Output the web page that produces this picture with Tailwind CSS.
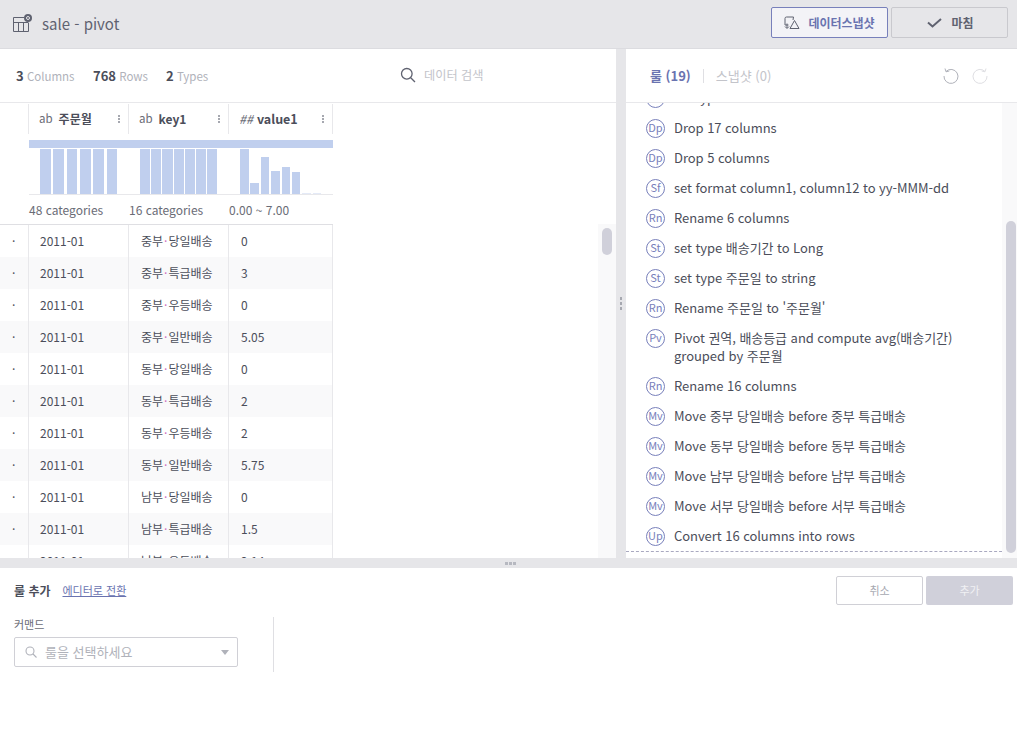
<!DOCTYPE html>
<html lang="ko">
<head>
<meta charset="UTF-8" />
<title>sale - pivot</title>
<script src="https://cdn.jsdelivr.net/npm/@tailwindcss/browser@4"></script>
</head>
<body class="h-[730px] w-[1017px] overflow-hidden bg-white text-[#4b4e5a] font-['Noto_Sans_CJK_KR','Noto_Sans',sans-serif]">

<!-- top bar -->
<header class="h-[49px] bg-[#e6e6e9] border-b border-[#dcdce0] flex items-center pl-[13px] pr-[9px]">
  <svg width="20" height="20" viewBox="0 0 20 20" fill="none" stroke="#5f6270" stroke-width="1" class="mr-[9px]">
    <path d="M11 3.500H.5v14h15V9M.5 8.500h15M5.500 8.500v9M10.500 8.500v9"/>
    <circle cx="15" cy="4" r="4" fill="#5f6270" stroke="none"/>
    <circle cx="15" cy="4" r="1.500" fill="none" stroke="#e6e6e9" stroke-width="1"/>
  </svg>
  <span class="text-[15px] text-[#5f6270]">sale - pivot</span>
  <div class="ml-auto mb-[3px] flex gap-[3px]">
    <button class="w-[117px] h-[31px] rounded-[2px] border border-[#7880bb] bg-[#f3f3f7] flex items-center justify-center gap-[8px] text-[12px] font-bold text-[#6a73b0]">
      <svg width="16" height="14" viewBox="0 0 16 14" fill="none" stroke="#5f6270" stroke-width="1"><path d="M4.500 9H1V2.500Q1 1 2.500 1h7l-.5 3M3 7.500V12M1 10.500l2 2 2-2M6 12.500L10.500 4.500l4.500 8z"/></svg>
      데이터스냅샷
    </button>
    <button class="w-[117px] h-[31px] rounded-[2px] border border-[#c9c9ce] bg-[#e6e6e9] flex items-center justify-center gap-[9px] pl-[2px] text-[12px] font-bold text-[#5f6270]">
      <svg width="15" height="10" viewBox="0 0 15 10" fill="none" stroke="#5f6270" stroke-width="2"><path d="M1 4.500l4.500 4L14 1"/></svg>
      마침
    </button>
  </div>
</header>

<!-- middle -->
<div class="h-[509px] flex">
  <!-- data side -->
  <section class="w-[616px] shrink-0 flex flex-col">
    <div class="h-[54px] shrink-0 border-b border-[#e8e8eb] flex items-center pl-4 text-[11.500px] text-[#b0b2ba]">
      <span class="w-[77px]"><b class="font-bold text-[13px] text-[#4b4e5a]">3</b> Columns</span>
      <span class="w-[73px]"><b class="font-bold text-[13px] text-[#4b4e5a]">768</b> Rows</span>
      <span class="w-[234px]"><b class="font-bold text-[13px] text-[#4b4e5a]">2</b> Types</span>
      <div class="flex items-center gap-[8px]">
        <svg width="16" height="16" viewBox="0 0 16 16" fill="none" stroke="#5f6270" stroke-width="1.300"><circle cx="6.800" cy="6.800" r="5.300"/><path d="M10.700 10.700l4.300 4.300"/></svg>
        <span class="text-[12.200px] text-[#c3c4ca]">데이터 검색</span>
      </div>
    </div>
    <div class="relative flex-1 overflow-hidden">
      <div class="w-[333px]">
        <!-- column heads -->
        <div class="grid grid-cols-[29px_100px_100px_104px] h-[30px] mt-[1px] text-[12px] font-bold">
          <div class="border-r border-[#e8e8eb]"></div>
          <div class="border-r border-[#e8e8eb] flex items-center pl-[10px] relative"><span class="font-normal text-[11.500px] text-[#6a6c76] mr-[6px]">ab</span>주문월<span class="absolute right-[8px] flex flex-col gap-px"><i class="size-[2px] bg-[#a6a8b0]"></i><i class="size-[2px] bg-[#a6a8b0]"></i><i class="size-[2px] bg-[#a6a8b0]"></i></span></div>
          <div class="border-r border-[#e8e8eb] flex items-center pl-[10px] relative"><span class="font-normal text-[11.500px] text-[#6a6c76] mr-[6px]">ab</span>key1<span class="absolute right-[8px] flex flex-col gap-px"><i class="size-[2px] bg-[#a6a8b0]"></i><i class="size-[2px] bg-[#a6a8b0]"></i><i class="size-[2px] bg-[#a6a8b0]"></i></span></div>
          <div class="border-r border-[#e8e8eb] flex items-center pl-[10px] relative"><span class="font-normal italic text-[12.500px] text-[#6a6c76] mr-[4px]">##</span><span class="text-[12.500px]">value1</span><span class="absolute right-[8px] flex flex-col gap-px"><i class="size-[2px] bg-[#a6a8b0]"></i><i class="size-[2px] bg-[#a6a8b0]"></i><i class="size-[2px] bg-[#a6a8b0]"></i></span></div>
        </div>
        <!-- histograms -->
        <div class="ml-[29px] mt-[6px] h-[8px] bg-[#c0cfee]"></div>
        <div class="ml-[29px] grid grid-cols-[100px_100px_104px] h-[47px] border-b border-[#e8e8eb]">
          <div class="flex items-end gap-[2.670px] pl-[11px]">
            <i class="w-[10.670px] h-[45px] bg-[#c0cfee]"></i><i class="w-[10.670px] h-[45px] bg-[#c0cfee]"></i><i class="w-[10.670px] h-[45px] bg-[#c0cfee]"></i><i class="w-[10.670px] h-[45px] bg-[#c0cfee]"></i><i class="w-[10.670px] h-[45px] bg-[#c0cfee]"></i><i class="w-[10.670px] h-[45px] bg-[#c0cfee]"></i>
          </div>
          <div class="flex items-end gap-[1px] pl-[11px]">
            <i class="w-[10.200px] h-[45px] bg-[#c0cfee]"></i><i class="w-[10.200px] h-[45px] bg-[#c0cfee]"></i><i class="w-[10.200px] h-[45px] bg-[#c0cfee]"></i><i class="w-[10.200px] h-[45px] bg-[#c0cfee]"></i><i class="w-[10.200px] h-[45px] bg-[#c0cfee]"></i><i class="w-[10.200px] h-[45px] bg-[#c0cfee]"></i><i class="w-[10.200px] h-[45px] bg-[#c0cfee]"></i>
          </div>
          <div class="flex items-end gap-[1.900px] pl-[11px]">
            <i class="w-[8.500px] h-[45px] bg-[#c0cfee]"></i><i class="w-[8.500px] h-[11px] bg-[#c0cfee]"></i><i class="w-[8.500px] h-[37px] bg-[#c0cfee]"></i><i class="w-[8.500px] h-[23px] bg-[#c0cfee]"></i><i class="w-[8.500px] h-[27px] bg-[#c0cfee]"></i><i class="w-[8.500px] h-[22px] bg-[#c0cfee]"></i><i class="w-[8.500px] h-[1px] bg-[#e4eaf7]"></i><i class="w-[8.500px] h-[1px] bg-[#e4eaf7]"></i>
          </div>
        </div>
        <div class="grid grid-cols-[29px_100px_100px_104px] h-[29px] items-center text-[12px] text-[#6a6c76]">
          <div></div><div>48 categories</div><div>16 categories</div><div>0.00 ~ 7.00</div>
        </div>
        <!-- rows -->
        <div id="rows" class="border-t border-[#dfdfe3] text-[12px] text-[#4b4e5a]"></div>
      </div>
      <!-- table scrollbar -->
      <div class="absolute right-0 top-[121px] bottom-0 w-[18px] bg-[#f9f9fa]">
        <div class="mx-auto mt-[4px] w-[10px] h-[27px] rounded-[5px] bg-[#d0d0da]"></div>
      </div>
    </div>
  </section>

  <!-- divider -->
  <div class="w-[10px] shrink-0 bg-[#e6e6e9] flex flex-col items-center justify-center gap-[2px]">
    <i class="w-[2px] h-[3px] bg-[#a6a8b0]"></i><i class="w-[2px] h-[3px] bg-[#a6a8b0]"></i><i class="w-[2px] h-[3px] bg-[#a6a8b0]"></i>
  </div>

  <!-- rule side -->
  <section class="flex-1 flex flex-col min-w-0">
    <div class="h-[54px] shrink-0 border-b border-[#e8e8eb] flex items-center pl-[24px] text-[13px]">
      <span class="font-bold text-[#6a73b0]">룰 (19)</span>
      <i class="w-px h-[14px] bg-[#dfdfe3] mx-[12px]"></i>
      <span class="text-[#c3c4ca]">스냅샷 (0)</span>
      <div class="ml-auto flex gap-[11px] mr-[28px]">
        <svg width="18" height="18" viewBox="0 0 18 18" fill="none" stroke="#b0b2ba" stroke-width="1"><path d="M4 4.500A7 7 0 1 1 2 9M3 1.500l1 3.300 3.300-.8"/></svg>
        <svg width="18" height="18" viewBox="0 0 18 18" fill="none" stroke="#dfdfe3" stroke-width="1"><path d="M14 4.500A7 7 0 1 0 16 9M15 1.500l-1 3.300-3.300-.8"/></svg>
      </div>
    </div>
    <div class="relative flex-1 overflow-hidden border-b border-dashed border-[#a9a9c0] mb-[6px] text-[13px] leading-[18px] text-[#4b4e5a]">
      <div id="rules" class="-mt-[20px] pl-[20px]"></div>
    </div>
    <!-- rule list scrollbar -->
    <div class="absolute left-[1002px] top-[103px] w-[15px] h-[455px] bg-[#f9f9fa]">
      <div class="absolute left-[4px] top-[118px] bottom-[5px] w-[10px] rounded-[5px] bg-[#d0d0da]"></div>
    </div>
  </section>
</div>

<!-- horizontal splitter -->
<div class="h-[10px] bg-[#e6e6e9] flex items-center justify-center gap-[1px] pl-[3px]">
  <i class="w-[3px] h-[3px] bg-[#b6b8c0]"></i><i class="w-[3px] h-[3px] bg-[#b6b8c0]"></i><i class="w-[3px] h-[3px] bg-[#b6b8c0]"></i>
</div>

<!-- rule editor -->
<footer class="h-[162px]">
  <div class="flex items-center h-[45px] pl-[14px] pr-[4px]">
    <span class="text-[12px] font-bold text-[#4b4e5a]">룰 추가</span>
    <a class="ml-[12px] text-[11px] text-[#6a73b0] underline">에디터로 전환</a>
    <div class="ml-auto flex gap-[3px]">
      <button class="w-[87px] h-[29px] rounded-[2px] border border-[#d0d0d6] text-[11px] text-[#a6a8b0]">취소</button>
      <button class="w-[87px] h-[29px] rounded-[2px] bg-[#d0d0da] text-[11px] text-[#f0f0f4]">추가</button>
    </div>
  </div>
  <div class="flex">
    <div class="w-[274px] h-[55px] border-r border-[#dfdfe3] pl-[14px] mt-[4px]">
      <div class="text-[11px] leading-[14px] text-[#6a6c76]">커맨드</div>
      <div class="mt-[6px] w-[224px] h-[30px] rounded-[2px] border border-[#d0d0d6] flex items-center pl-[10px] pr-[8px] text-[13px] text-[#b0b2ba]">
        <svg width="12" height="12" viewBox="0 0 12 12" fill="none" stroke="#b0b2ba" stroke-width="1.100" class="mr-[8px]"><circle cx="5" cy="5" r="4"/><path d="M8 8l3.500 3.500"/></svg>
        룰을 선택하세요
        <i class="ml-auto w-0 h-0 border-x-[4px] border-x-transparent border-t-[5px] border-t-[#b0b2ba]"></i>
      </div>
    </div>
  </div>
</footer>

<script>
  // table rows
  const rows = [
    ['중부', '당일배송', '0'], ['중부', '특급배송', '3'], ['중부', '우등배송', '0'], ['중부', '일반배송', '5.05'],
    ['동부', '당일배송', '0'], ['동부', '특급배송', '2'], ['동부', '우등배송', '2'], ['동부', '일반배송', '5.75'],
    ['남부', '당일배송', '0'], ['남부', '특급배송', '1.5'], ['남부', '우등배송', '2.14']
  ];
  const cell = 'border-r border-[#e8e8eb] flex items-center pl-[12px]';
  document.getElementById('rows').innerHTML = rows.map((r, i) => `
    <div class="grid grid-cols-[29px_100px_100px_104px] h-[32px] ${i % 2 ? 'bg-[#f9f9fa]' : ''}">
      <div class="${cell}">·</div>
      <div class="border-r border-[#e8e8eb] flex items-center pl-[11px]">2011-01</div>
      <div class="${cell}">${r[0]}<span class="text-[#d070c0] mx-[1px]">·</span>${r[1]}</div>
      <div class="${cell}">${r[2]}</div>
    </div>`).join('');

  // rule list
  const rules = [
    ['St', 'set type'], ['Dp', 'Drop 17 columns'], ['Dp', 'Drop 5 columns'],
    ['Sf', 'set format column1, column12 to yy-MMM-dd'], ['Rn', 'Rename 6 columns'],
    ['St', 'set type 배송기간 to Long'], ['St', 'set type 주문일 to string'], ['Rn', "Rename 주문일 to '주문월'"],
    ['Pv', 'Pivot 권역, 배송등급 and compute avg(배송기간) grouped by 주문월'], ['Rn', 'Rename 16 columns'],
    ['Mv', 'Move 중부 당일배송 before 중부 특급배송'], ['Mv', 'Move 동부 당일배송 before 동부 특급배송'],
    ['Mv', 'Move 남부 당일배송 before 남부 특급배송'], ['Mv', 'Move 서부 당일배송 before 서부 특급배송'],
    ['Up', 'Convert 16 columns into rows']
  ];
  document.getElementById('rules').innerHTML = rules.map(([code, text]) => `
    <div class="flex items-start pt-[6px] ${code === 'Pv' ? 'h-[48px]' : 'h-[30px]'}">
      <span class="shrink-0 w-[19px] h-[19px] rounded-full border border-[#7880bb] text-[#7880bb] text-[11px] leading-none pb-[2px] flex items-center justify-center mr-[9px]">${code}</span>
      <span class="w-[300px] tracking-[-0.05px]">${text}</span>
    </div>`).join('');
</script>
</body>
</html>
